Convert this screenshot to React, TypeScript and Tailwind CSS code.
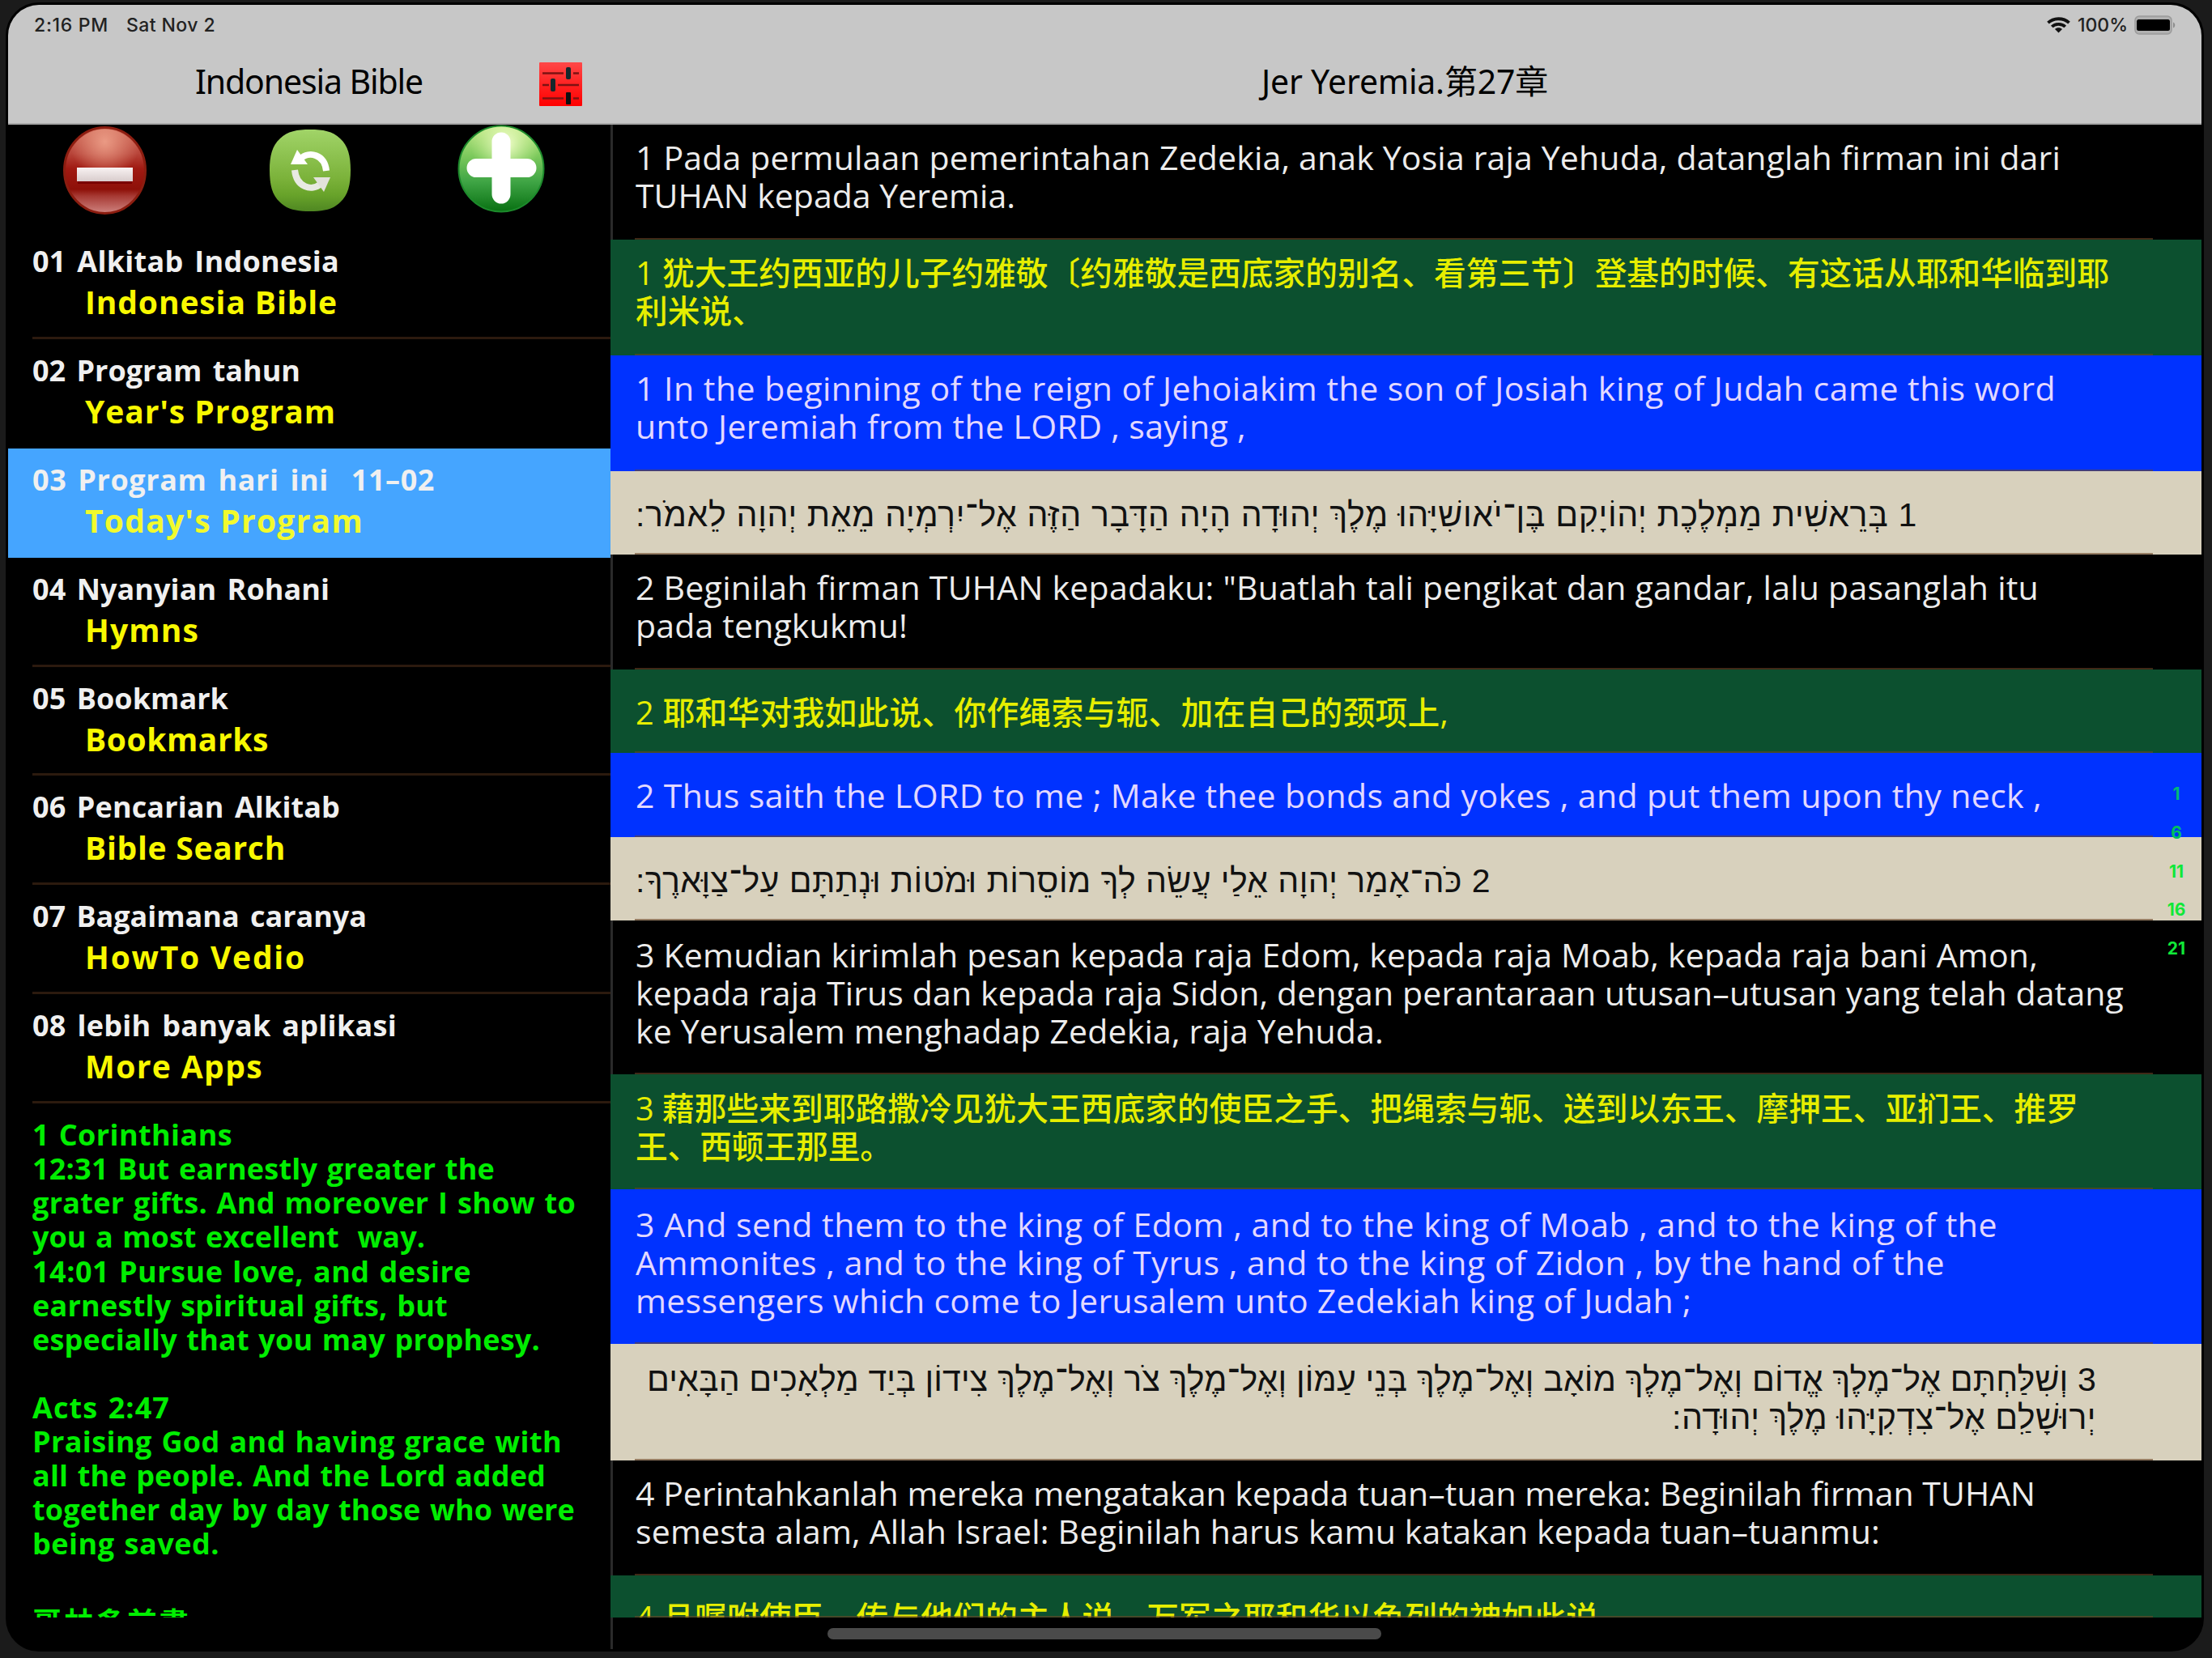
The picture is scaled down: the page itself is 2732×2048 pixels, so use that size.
import React, { useLayoutEffect, useRef, useState } from "react";

interface TextLine {
  text: string;
  width: number;
}

interface MenuItem {
  label: TextLine;
  sub: TextLine;
}

interface Verse {
  lang: "id" | "zh" | "en" | "he";
  box: string;
  lines: TextLine[];
}

const menu: MenuItem[] = [
  { label: { text: "01 Alkitab Indonesia", width: 379 }, sub: { text: "Indonesia Bible", width: 312 } },
  { label: { text: "02 Program tahun", width: 331 }, sub: { text: "Year's Program", width: 310 } },
  { label: { text: "03 Program hari ini  11–02", width: 497 }, sub: { text: "Today's Program", width: 344 } },
  { label: { text: "04 Nyanyian Rohani", width: 367 }, sub: { text: "Hymns", width: 141 } },
  { label: { text: "05 Bookmark", width: 242 }, sub: { text: "Bookmarks", width: 227 } },
  { label: { text: "06 Pencarian Alkitab", width: 380 }, sub: { text: "Bible Search", width: 248 } },
  { label: { text: "07 Bagaimana caranya", width: 413 }, sub: { text: "HowTo Vedio", width: 273 } },
  { label: { text: "08 lebih banyak aplikasi", width: 450 }, sub: { text: "More Apps", width: 220 } },
];

const notes: TextLine[] = [
  { text: "1 Corinthians", width: 247 },
  { text: "12:31 But earnestly greater the", width: 571 },
  { text: "grater gifts. And moreover I show to", width: 671 },
  { text: "you a most excellent  way.", width: 485 },
  { text: "14:01 Pursue love, and desire", width: 542 },
  { text: "earnestly spiritual gifts, but", width: 513 },
  { text: "especially that you may prophesy.", width: 627 },
  { text: "", width: 0 },
  { text: "Acts 2:47", width: 170 },
  { text: "Praising God and having grace with", width: 654 },
  { text: "all the people. And the Lord added", width: 634 },
  { text: "together day by day those who were", width: 670 },
  { text: "being saved.", width: 231 },
  { text: "", width: 0 },
];

const verses: Verse[] = [
  {
    lang: "id",
    box: "h-[142px] pt-[17px]",
    lines: [
      { text: "1 Pada permulaan pemerintahan Zedekia, anak Yosia raja Yehuda, datanglah firman ini dari", width: 1760 },
      { text: "TUHAN kepada Yeremia.", width: 469 },
    ],
  },
  {
    lang: "zh",
    box: "h-[143px] pt-[18px]",
    lines: [
      { text: "1 犹大王约西亚的儿子约雅敬〔约雅敬是西底家的别名、看第三节〕登基的时候、有这话从耶和华临到耶", width: 1820 },
      { text: "利米说、", width: 159 },
    ],
  },
  {
    lang: "en",
    box: "h-[143px] pt-[17px]",
    lines: [
      { text: "1 In the beginning of the reign of Jehoiakim the son of Josiah king of Judah came this word", width: 1754 },
      { text: "unto Jeremiah from the LORD , saying ,", width: 754 },
    ],
  },
  {
    lang: "he",
    box: "h-[103px] pt-[31px]",
    lines: [
      {
        text: "1 בְּרֵאשִׁית מַמְלֶכֶת יְהוֹיָקִם בֶּן־יֹאושִׁיָּהוּ מֶלֶךְ יְהוּדָה הָיָה הַדָּבָר הַזֶּה אֶל־יִרְמְיָה מֵאֵת יְהוָה לֵאמֹר:",
        width: 1583,
      },
    ],
  },
  {
    lang: "id",
    box: "h-[142px] pt-[17px]",
    lines: [
      { text: '2 Beginilah firman TUHAN kepadaku: "Buatlah tali pengikat dan gandar, lalu pasanglah itu', width: 1733 },
      { text: "pada tengkukmu!", width: 336 },
    ],
  },
  {
    lang: "zh",
    box: "h-[103px] pt-[30px]",
    lines: [{ text: "2 耶和华对我如此说、你作绳索与轭、加在自己的颈项上,", width: 1004 }],
  },
  {
    lang: "en",
    box: "h-[104px] pt-[29px]",
    lines: [{ text: "2 Thus saith the LORD to me ; Make thee bonds and yokes , and put them upon thy neck ,", width: 1737 }],
  },
  {
    lang: "he",
    box: "h-[103px] pt-[31px]",
    lines: [
      {
        text: "2 כֹּה־אָמַר יְהוָה אֵלַי עֲשֵׂה לְךָ מוֹסֵרוֹת וּמֹטוֹת וּנְתַתָּם עַל־צַוָּארֶךָ:",
        width: 1056,
      },
    ],
  },
  {
    lang: "id",
    box: "h-[190px] pt-[19px]",
    lines: [
      { text: "3 Kemudian kirimlah pesan kepada raja Edom, kepada raja Moab, kepada raja bani Amon,", width: 1732 },
      { text: "kepada raja Tirus dan kepada raja Sidon, dengan perantaraan utusan–utusan yang telah datang", width: 1838 },
      { text: "ke Yerusalem menghadap Zedekia, raja Yehuda.", width: 924 },
    ],
  },
  {
    lang: "zh",
    box: "h-[142px] pt-[19px]",
    lines: [
      { text: "3 藉那些来到耶路撒冷见犹大王西底家的使臣之手、把绳索与轭、送到以东王、摩押王、亚扪王、推罗", width: 1782 },
      { text: "王、西顿王那里。", width: 317 },
    ],
  },
  {
    lang: "en",
    box: "h-[191px] pt-[20px]",
    lines: [
      { text: "3 And send them to the king of Edom , and to the king of Moab , and to the king of the", width: 1682 },
      { text: "Ammonites , and to the king of Tyrus , and to the king of Zidon , by the hand of the", width: 1617 },
      { text: "messengers which come to Jerusalem unto Zedekiah king of Judah ;", width: 1304 },
    ],
  },
  {
    lang: "he",
    box: "h-[144px] pt-[21px]",
    lines: [
      {
        text: "3 וְשִׁלַּחְתָּם אֶל־מֶלֶךְ אֱדוֹם וְאֶל־מֶלֶךְ מוֹאָב וְאֶל־מֶלֶךְ בְּנֵי עַמּוֹן וְאֶל־מֶלֶךְ צֹר וְאֶל־מֶלֶךְ צִידוֹן בְּיַד מַלְאָכִים הַבָּאִים",
        width: 1790,
      },
      { text: "יְרוּשָׁלִַם אֶל־צִדְקִיָּהוּ מֶלֶךְ יְהוּדָה:", width: 524 },
    ],
  },
  {
    lang: "id",
    box: "h-[142px] pt-[17px]",
    lines: [
      { text: "4 Perintahkanlah mereka mengatakan kepada tuan–tuan mereka: Beginilah firman TUHAN", width: 1729 },
      { text: "semesta alam, Allah Israel: Beginilah harus kamu katakan kepada tuan–tuanmu:", width: 1537 },
    ],
  },
  {
    lang: "zh",
    box: "h-[52px] pt-[29px]",
    lines: [{ text: "4 且嘱咐使臣、传与他们的主人说、万军之耶和华以色列的神如此说、", width: 1229 }],
  },
];

const verseStyles = {
  id: "bg-black text-[#ececec] text-[41px] font-medium font-['Open_Sans',sans-serif] shadow-[inset_3px_0_0_#2a2a2a]",
  zh: "bg-[#0c502f] text-[#e6ee00] text-[39.7px] font-medium font-['Open_Sans','Noto_Sans_CJK_SC',sans-serif]",
  en: "bg-[#0032ff] text-[#e2d8ff] text-[41px] font-medium font-['Open_Sans',sans-serif]",
  he: "bg-[#d8d1bd] text-[#111111] text-[41px] font-['Liberation_Sans',sans-serif]",
};

// spreads the letters so that the line takes the given width
const FitLine = ({ text, width, className = "" }: TextLine & { className?: string }) => {
  const ref = useRef<HTMLSpanElement>(null);
  const [spacing, setSpacing] = useState(0);

  useLayoutEffect(() => {
    const el = ref.current;
    if (!el || !width) return;
    el.style.letterSpacing = "0px";
    const base = el.getBoundingClientRect().width;
    el.style.letterSpacing = "1px";
    const step = el.getBoundingClientRect().width - base;
    const next = step > 0 ? (width - base) / step : 0;
    el.style.letterSpacing = `${next}px`;
    setSpacing(next);
  }, [text, width]);

  return (
    <span ref={ref} className={`block w-fit whitespace-pre ${className}`} style={{ letterSpacing: `${spacing}px` }}>
      {text || " "}
    </span>
  );
};

const StatusBar = () => (
  <div className="flex h-[50px] items-center justify-between pl-8 pr-[31px] text-[23px] font-medium text-[#222222] font-['Inter',sans-serif]">
    <div className="flex gap-[22px]">
      <FitLine text="2:16 PM" width={92} />
      <FitLine text="Sat Nov 2" width={110} />
    </div>
    <div className="flex items-center">
      <svg className="h-[20px] w-[29px]" viewBox="0 0 29 20" fill="none" stroke="#111" strokeWidth="3.8">
        <path d="M1.5 7.2C8.5 0.6 20.5 0.6 27.5 7.2" />
        <path d="M6.3 12C10.5 7.8 18.5 7.8 22.7 12" />
        <path d="M14.5 19.5L10 15C12.4 12.8 16.6 12.8 19 15Z" fill="#111" stroke="none" />
      </svg>
      <FitLine text="100%" width={62} className="ml-[9px]" />
      <svg className="ml-[8px] h-[24px] w-[52px]" viewBox="0 0 52 24">
        <rect x="1" y="1" width="45" height="22" rx="5" fill="#b0b0b0" stroke="#9a9a9a" strokeWidth="1.5" />
        <rect x="3" y="5" width="41" height="14" rx="2.5" fill="#000" />
        <path d="M48 8.5C51 9.5 51 14.5 48 15.5Z" fill="#8e8e8e" />
      </svg>
    </div>
  </div>
);

const SettingsIcon = () => (
  <svg className="h-[54px] w-[53px]" viewBox="0 0 53 54">
    <defs>
      <linearGradient id="settings" x1="0" y1="0" x2="0" y2="1">
        <stop offset="0" stopColor="#ff4848" />
        <stop offset="0.5" stopColor="#ff2222" />
        <stop offset="1" stopColor="#ff0000" />
      </linearGradient>
    </defs>
    <rect width="53" height="54" rx="1" fill="url(#settings)" />
    <g stroke="#7d1212" strokeWidth="2.6">
      <path d="M4 13.5H30M42 13.5H49" />
      <path d="M4 28H12M23 28H49" />
      <path d="M4 44.5H30M42 44.5H49" />
    </g>
    <g fill="#14282c">
      <rect x="33" y="6" width="6" height="15" rx="2" />
      <rect x="14" y="20" width="6" height="16" rx="2" />
      <rect x="33" y="37" width="6" height="15" rx="1" fill="#0c1012" />
    </g>
  </svg>
);

const MinusIcon = () => (
  <svg className="ml-[68px] mt-[2px] h-[109px] w-[103px]" viewBox="0 0 103 109">
    <defs>
      <linearGradient id="minus" x1="0" y1="0" x2="0" y2="1">
        <stop offset="0" stopColor="#cf6a58" />
        <stop offset="0.3" stopColor="#b8453a" />
        <stop offset="0.48" stopColor="#a01a12" />
        <stop offset="0.72" stopColor="#8e1008" />
        <stop offset="0.8" stopColor="#a73a34" />
        <stop offset="1" stopColor="#cf8480" />
      </linearGradient>
      <radialGradient id="minusShine" cx="0.5" cy="0.15" r="0.45">
        <stop offset="0" stopColor="#ea9a84" />
        <stop offset="1" stopColor="#ea9a84" stopOpacity="0" />
      </radialGradient>
      <linearGradient id="minusBar" x1="0" y1="0" x2="0" y2="1">
        <stop offset="0" stopColor="#f8f2f2" />
        <stop offset="1" stopColor="#d8cccc" />
      </linearGradient>
    </defs>
    <ellipse cx="51.5" cy="54.5" rx="50" ry="53" fill="url(#minus)" stroke="#8c1d10" strokeWidth="3" />
    <ellipse cx="51.5" cy="54.5" rx="48" ry="51" fill="url(#minusShine)" />
    <rect x="18" y="68" width="67" height="3" fill="#7a0000" />
    <rect x="17" y="51" width="69" height="17" fill="url(#minusBar)" />
  </svg>
);

const RefreshIcon = () => (
  <svg className="ml-[152px] mt-[6px] h-[101px] w-[100px]" viewBox="0 0 100 101">
    <defs>
      <linearGradient id="refresh" x1="0" y1="0" x2="0" y2="1">
        <stop offset="0" stopColor="#a1d468" />
        <stop offset="0.6" stopColor="#7bb23a" />
        <stop offset="0.8" stopColor="#68a32a" />
        <stop offset="1" stopColor="#4f8722" />
      </linearGradient>
    </defs>
    <path
      d="M50 0C66 0 78 2 87 11C97 20 100 33 100 50C100 68 97 81 87 90C78 99 66 101 50 101C34 101 22 99 13 90C3 81 0 68 0 50C0 33 3 20 13 11C22 2 34 0 50 0Z"
      fill="url(#refresh)"
    />
    <g fill="none" stroke="#ffffff" strokeWidth="8">
      <path d="M38 36C49 26 68 31 70 51" />
      <path d="M63 67C52 77 33 71 31 50" stroke="#e8eae2" />
    </g>
    <path d="M34 25L47 43H26Z" fill="#ffffff" />
    <path d="M67 77L54 59H75Z" fill="#e2e2da" />
  </svg>
);

const PlusIcon = () => (
  <svg className="ml-[132px] h-[109px] w-[108px]" viewBox="0 0 108 109">
    <defs>
      <linearGradient id="plus" x1="0" y1="0" x2="0" y2="1">
        <stop offset="0" stopColor="#c4ea8c" />
        <stop offset="0.35" stopColor="#7cc95c" />
        <stop offset="0.65" stopColor="#3fa545" />
        <stop offset="1" stopColor="#087012" />
      </linearGradient>
      <radialGradient id="plusShine" cx="0.55" cy="0.2" r="0.42">
        <stop offset="0" stopColor="#f4ffd0" />
        <stop offset="1" stopColor="#d6f59a" stopOpacity="0" />
      </radialGradient>
    </defs>
    <ellipse cx="54" cy="54.5" rx="52.5" ry="53" fill="url(#plus)" stroke="#1d8a2c" strokeWidth="2" />
    <ellipse cx="54" cy="54.5" rx="51" ry="52" fill="url(#plusShine)" />
    <path d="M54 21V86M23 53.5H86" stroke="#ffffff" strokeWidth="23" strokeLinecap="round" />
  </svg>
);

const Sidebar = () => (
  <div className="flex h-full w-[744px] shrink-0 flex-col bg-black font-['Open_Sans','Noto_Sans_CJK_TC',sans-serif] font-bold">
    <div className="flex h-[130px] shrink-0 items-start">
      <MinusIcon />
      <RefreshIcon />
      <PlusIcon />
    </div>
    {menu.map((item, i) => (
      <div key={item.label.text} className={`h-[134.9px] shrink-0 ${i === 2 ? "bg-[#45a5ff]" : "bg-black"}`}>
        <div className="ml-[30px] flex h-full flex-col">
          <FitLine {...item.label} className="mt-[13px] h-[50px] text-[36px] leading-[51px] text-[#f0f0f0] [word-spacing:4px]" />
          <FitLine
            {...item.sub}
            className={`ml-[65px] h-[51px] text-[39px] leading-[51px] ${i === 2 ? "text-[#f2fa2c]" : "text-[#f8f800]"}`}
          />
          {i !== 1 && i !== 2 && <div className="mt-auto h-[3px] bg-[#2c1a0e]" />}
        </div>
      </div>
    ))}
    <div className="ml-[30px] h-[635px] shrink-0 overflow-hidden pt-[18px] text-[36px] leading-[42.1px] text-[#00ee00] [word-spacing:2px]">
      {notes.map((line, i) => (
        <FitLine key={i} {...line} className="h-[42.1px]" />
      ))}
      <FitLine text="哥林多前書" width={196} className="mt-[14px]" />
    </div>
  </div>
);

const VerseRow = ({ verse }: { verse: Verse }) => (
  <div className={`relative shrink-0 overflow-hidden pl-[31px] leading-[47px] ${verse.box} ${verseStyles[verse.lang]}`}>
    <div className="w-fit" dir={verse.lang === "he" ? "rtl" : "ltr"}>
      {verse.lines.map((line) => (
        <FitLine
          key={line.text}
          {...line}
          className={verse.lang === "he" && verse.lines.length > 1 ? "ml-[14px]" : ""}
        />
      ))}
    </div>
    <div className="absolute bottom-0 left-[30px] h-[2px] w-[1875px] bg-[#6b4426]/60" />
  </div>
);

const VerseIndex = () => (
  <div className="absolute right-[14px] top-[951px] flex w-[34px] flex-col items-center text-[21px] font-bold leading-[47.8px] text-[#10e838] font-['Inter',sans-serif]">
    <span className="text-[#00b878]">1</span>
    <span className="text-[#00c060]">6</span>
    <span>11</span>
    <span>16</span>
    <span>21</span>
  </div>
);

const App = () => {
  return (
    <div className="h-[2048px] w-[2732px] overflow-hidden bg-[#1b1b1b] pl-[10px] pt-[6px]">
      <div className="relative flex h-[2031px] w-[2709px] flex-col overflow-hidden rounded-[38px] bg-black ring-[3px] ring-black">
        <div className="h-[148px] shrink-0 border-b-2 border-[#a8a8a8] bg-[#c7c7c7]">
          <StatusBar />
          <div className="flex h-[96px] text-[41px] leading-[80px] text-black font-['Noto_Sans','Noto_Sans_CJK_SC',sans-serif]">
            <div className="flex w-[744px] items-start">
              <FitLine text="Indonesia Bible" width={281} className="ml-[231px] mt-[4px]" />
              <div className="ml-[144px] mt-[21px]">
                <SettingsIcon />
              </div>
            </div>
            <FitLine text="Jer Yeremia.第27章" width={354} className="ml-[804px] mt-[4px]" />
          </div>
        </div>
        <div className="flex min-h-0 flex-1">
          <Sidebar />
          <div className="flex flex-1 flex-col">
            {verses.map((verse, i) => (
              <VerseRow key={i} verse={verse} />
            ))}
            <div className="w-[3px] flex-1 bg-[#2a2a2a]" />
          </div>
        </div>
        <VerseIndex />
        <div className="absolute bottom-[12px] left-[1012px] h-[14px] w-[684px] rounded-full bg-[#4a4a4a]" />
      </div>
    </div>
  );
};

export default App;
